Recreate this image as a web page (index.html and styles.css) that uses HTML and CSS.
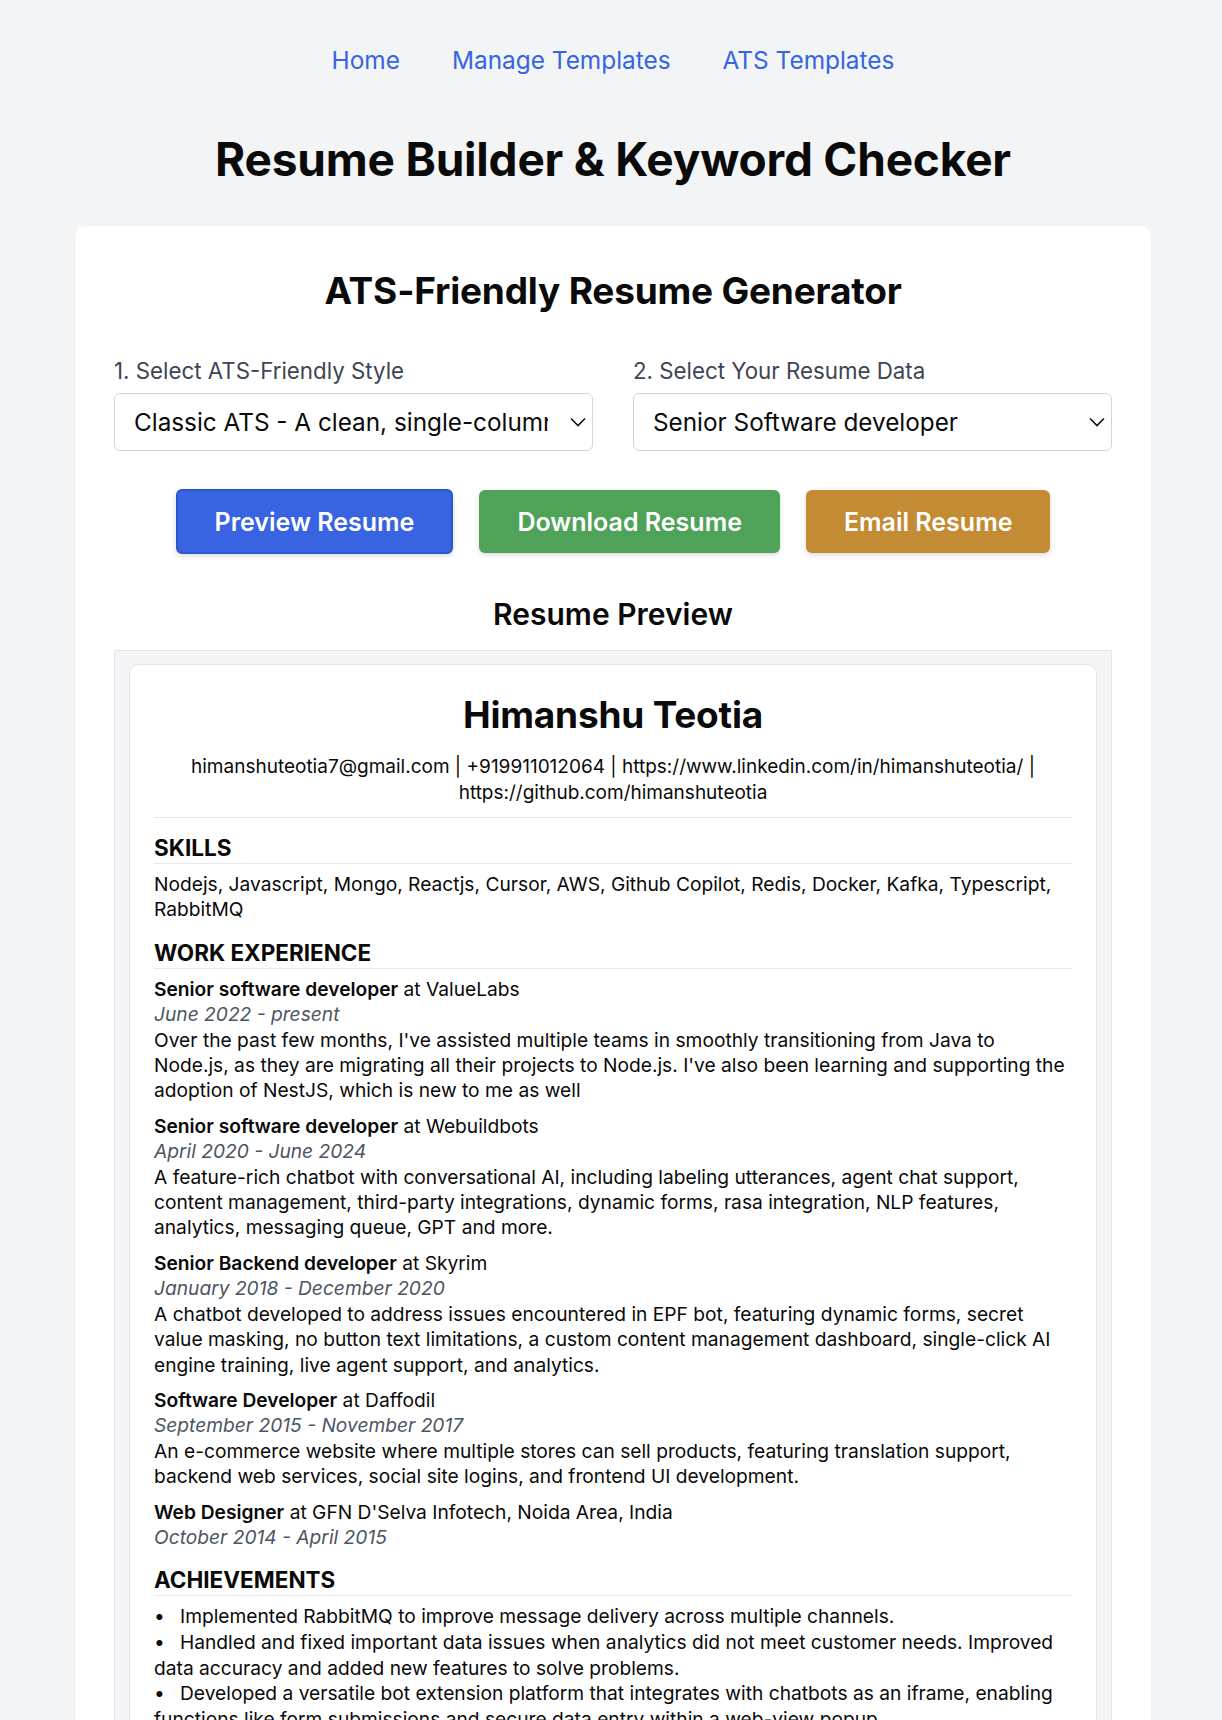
FILE: index.html
```html
<!DOCTYPE html>
<html lang="en">
<head>
<meta charset="utf-8">
<title>Resume Builder &amp; Keyword Checker</title>
<link rel="stylesheet" href="styles.css">
</head>
<body>
<nav class="topnav">
  <a href="#">Home</a>
  <a href="#">Manage Templates</a>
  <a href="#">ATS Templates</a>
</nav>
<h1 class="page-title">Resume Builder &amp; Keyword Checker</h1>
<main class="card">
  <h2 class="card-title">ATS-Friendly Resume Generator</h2>
  <div class="selectors">
    <div class="field">
      <label class="field-label">1. Select ATS-Friendly Style</label>
      <div class="select-wrap">
        <select class="select">
          <option>Classic ATS - A clean, single-column layout</option>
        </select>
        <svg class="chev" viewBox="0 0 16 10" width="16" height="10"><path d="M1 1.5 L8 8.5 L15 1.5" fill="none" stroke="#111" stroke-width="1.6"/></svg>
      </div>
    </div>
    <div class="field">
      <label class="field-label">2. Select Your Resume Data</label>
      <div class="select-wrap">
        <select class="select">
          <option>Senior Software developer</option>
        </select>
        <svg class="chev" viewBox="0 0 16 10" width="16" height="10"><path d="M1 1.5 L8 8.5 L15 1.5" fill="none" stroke="#111" stroke-width="1.6"/></svg>
      </div>
    </div>
  </div>
  <div class="actions">
    <button class="btn btn-blue">Preview Resume</button>
    <button class="btn btn-green">Download Resume</button>
    <button class="btn btn-gold">Email Resume</button>
  </div>
  <h3 class="preview-title">Resume Preview</h3>
  <div class="preview">
    <div class="paper">
      <h2 class="name">Himanshu Teotia</h2>
      <p class="contact">himanshuteotia7@gmail.com | +919911012064 | https://www.linkedin.com/in/himanshuteotia/ | https://github.com/himanshuteotia</p>
      <section class="section">
        <h4 class="sec-title">SKILLS</h4>
        <p class="text">Nodejs, Javascript, Mongo, Reactjs, Cursor, AWS, Github Copilot, Redis, Docker, Kafka, Typescript, RabbitMQ</p>
      </section>
      <section class="section">
        <h4 class="sec-title">WORK EXPERIENCE</h4>
        <div class="job">
          <div class="job-head"><strong>Senior software developer</strong> at ValueLabs</div>
          <div class="job-date">June 2022 - present</div>
          <p class="text">Over the past few months, I've assisted multiple teams in smoothly transitioning from Java to Node.js, as they are migrating all their projects to Node.js. I've also been learning and supporting the adoption of NestJS, which is new to me as well</p>
        </div>
        <div class="job">
          <div class="job-head"><strong>Senior software developer</strong> at Webuildbots</div>
          <div class="job-date">April 2020 - June 2024</div>
          <p class="text">A feature-rich chatbot with conversational AI, including labeling utterances, agent chat support, content management, third-party integrations, dynamic forms, rasa integration, NLP features, analytics, messaging queue, GPT and more.</p>
        </div>
        <div class="job">
          <div class="job-head"><strong>Senior Backend developer</strong> at Skyrim</div>
          <div class="job-date">January 2018 - December 2020</div>
          <p class="text">A chatbot developed to address issues encountered in EPF bot, featuring dynamic forms, secret value masking, no button text limitations, a custom content management dashboard, single-click AI engine training, live agent support, and analytics.</p>
        </div>
        <div class="job">
          <div class="job-head"><strong>Software Developer</strong> at Daffodil</div>
          <div class="job-date">September 2015 - November 2017</div>
          <p class="text">An e-commerce website where multiple stores can sell products, featuring translation support, backend web services, social site logins, and frontend UI development.</p>
        </div>
        <div class="job">
          <div class="job-head"><strong>Web Designer</strong> at GFN D'Selva Infotech, Noida Area, India</div>
          <div class="job-date">October 2014 - April 2015</div>
        </div>
      </section>
      <section class="section">
        <h4 class="sec-title">ACHIEVEMENTS</h4>
        <ul class="bullets">
          <li>Implemented RabbitMQ to improve message delivery across multiple channels.</li>
          <li>Handled and fixed important data issues when analytics did not meet customer needs. Improved data accuracy and added new features to solve problems.</li>
          <li>Developed a versatile bot extension platform that integrates with chatbots as an iframe, enabling functions like form submissions and secure data entry within a web-view popup.</li>
          <li>Built a custom content management dashboard used by multiple teams.</li>
        </ul>
      </section>
    </div>
  </div>
</main>
</body>
</html>
```

FILE: styles.css
```css
* { box-sizing: border-box; }
html { margin: 0; padding: 0; }
body {
  margin: 0;
  padding: 0 0 0 4px;
  background: #f3f4f6;
  font-family: Inter, "Liberation Sans", sans-serif;
  color: #0a0a0a;
}
.topnav {
  display: flex;
  justify-content: center;
  gap: 52px;
  padding-top: 44px;
}
.topnav a {
  color: #3565e3;
  text-decoration: none;
  font-size: 24.4px;
  line-height: 32px;
}
.page-title {
  margin: 56px 0 0;
  text-align: center;
  font-size: 46px;
  line-height: 54px;
  font-weight: 700;
  letter-spacing: -0.2px;
}
.card {
  width: 1076px;
  margin: 40px auto 0;
  background: #fff;
  border-radius: 10px;
  padding: 40px 39px 0;
  box-shadow: 0 1px 3px rgba(0,0,0,0.05);
}
.card-title {
  margin: 0;
  text-align: center;
  font-size: 37px;
  line-height: 50px;
  font-weight: 700;
  letter-spacing: -0.2px;
}
.selectors {
  display: grid;
  grid-template-columns: 1fr 1fr;
  gap: 40px;
  margin-top: 40px;
}
.field-label {
  display: block;
  font-size: 22.3px;
  line-height: 30px;
  color: #3d4554;
  margin-bottom: 7px;
}
.select-wrap { position: relative; }
.select {
  appearance: none;
  -webkit-appearance: none;
  width: 100%;
  height: 58px;
  border: 1px solid #d1d5db;
  border-radius: 6px;
  background: #fff;
  font-family: inherit;
  font-size: 24.3px;
  color: #0a0a0a;
  padding: 0 44px 0 19px;
}
.chev {
  position: absolute;
  right: 7px;
  top: 24px;
  pointer-events: none;
}
.actions {
  display: flex;
  justify-content: center;
  align-items: center;
  gap: 26px;
  margin-top: 38px;
}
.btn {
  height: 63px;
  border: 0;
  border-radius: 6px;
  color: #fff;
  font-family: inherit;
  font-size: 25px;
  font-weight: 600;
  padding: 0 38px;
  box-shadow: 0 2px 5px rgba(0,0,0,0.15);
}
.btn-blue { background: #3864e1; border: 2px solid #2c56cc; height: 65px; padding: 0 37px; }
.btn-green { background: #4ea359; }
.btn-gold { background: #c28b34; }
.preview-title {
  margin: 40px 0 0;
  text-align: center;
  font-size: 30px;
  line-height: 40px;
  font-weight: 600;
}
.preview {
  margin-top: 16px;
  background: #f4f5f7;
  border: 1px solid #e5e7eb;
  padding: 13px 14px 0;
}
.paper {
  background: #fff;
  border: 1px solid #e3e5e9;
  border-radius: 10px;
  padding: 27px 24px 30px;
}
.name {
  margin: 0;
  text-align: center;
  font-size: 37px;
  line-height: 46px;
  font-weight: 700;
  letter-spacing: -0.2px;
}
.contact {
  margin: 16px 0 0;
  text-align: center;
  font-size: 19px;
  line-height: 26px;
  padding-bottom: 11px;
  border-bottom: 1px solid #e5e7eb;
}
.section { margin-top: 15px; }
.sec-title {
  margin: 0 0 8px;
  font-size: 22.5px;
  line-height: 29px;
  font-weight: 700;
  border-bottom: 1px solid #e5e7eb;
  padding-bottom: 1px;
}
.text {
  margin: 0;
  font-size: 19.2px;
  line-height: 25.4px;
}
.job { margin-top: 10px; font-size: 19.2px; line-height: 25.4px; }
.sec-title + .job { margin-top: 8px; }
.job-head strong { font-weight: 600; }
.job-date { color: #4b5563; font-style: italic; }
.bullets {
  list-style: none;
  margin: 8px 0 0;
  padding: 0;
  font-size: 19.2px;
  line-height: 25.6px;
}
.bullets li::before {
  content: "\2022";
  display: inline-block;
  width: 26px;
}
```
